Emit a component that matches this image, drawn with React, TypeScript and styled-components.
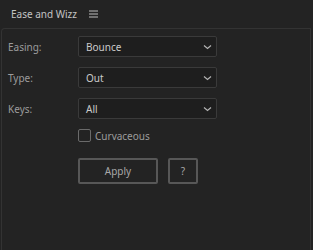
import React from "react";
import styled, { createGlobalStyle } from "styled-components";

const FONT = `"Noto Sans", Lato, "Liberation Sans", sans-serif`;

const Global = createGlobalStyle`
  html, body { margin: 0; padding: 0; background: #232323; }
  body { width: 313px; height: 250px; overflow: hidden; font-family: ${FONT}; }
`;

const Shell = styled.div`
  display: flex;
  flex-direction: column;
  height: 250px;
  background: #232323;
`;

const Header = styled.div`
  height: 28px;
  display: flex;
  align-items: center;
  gap: 12px;
  padding-left: 11px;
  box-sizing: border-box;
`;

const Title = styled.span`
  font-size: 10px;
  color: #c4c4c4;
`;

const Panel = styled.div`
  flex: 1;
  margin: 0 2px 0 1px;
  border: 1px solid #333333;
  border-bottom: none;
  border-top-left-radius: 4px;
  border-top-right-radius: 1px;
  padding: 7px 0 0 6px;
  display: flex;
  flex-direction: column;
`;

const FieldGrid = styled.div`
  display: grid;
  grid-template-columns: 70px 139px;
  row-gap: 10px;
  align-items: center;
`;

const Label = styled.span`
  font-size: 10px;
  color: #9c9c9c;
`;

const Select = styled.div`
  height: 21px;
  box-sizing: border-box;
  border: 1px solid #3a3a3a;
  border-radius: 2px;
  background: #1e1e1e;
  display: flex;
  align-items: center;
  justify-content: space-between;
  padding: 0 4px 0 7px;
  font-size: 10px;
  color: #cacaca;
`;

const CheckRow = styled.div`
  margin-top: 10px;
  padding-left: 70px;
  display: flex;
  align-items: center;
  gap: 4px;
  font-size: 10px;
  color: #9c9c9c;
  height: 13px;
`;

const Box = styled.span`
  flex: none;
  width: 13px;
  height: 13px;
  box-sizing: border-box;
  border: 1px solid #6a6a6a;
  border-radius: 2px;
`;

const Buttons = styled.div`
  margin-top: 16px;
  padding-left: 70px;
  display: flex;
  gap: 10px;
`;

const Button = styled.button<{ $w: number }>`
  width: ${(p) => p.$w}px;
  height: 26px;
  box-sizing: border-box;
  border: 2px solid #575757;
  border-radius: 2px;
  background: transparent;
  color: #a8a8a8;
  font-family: ${FONT};
  font-size: 10px;
  padding: 0;
`;

const Chevron = () => (
  <svg width="9" height="6" viewBox="0 0 9 6">
    <path d="M1 1.5 L4.5 4.5 L8 1.5" fill="none" stroke="#b4b4b4" strokeWidth="1.2" />
  </svg>
);

const Burger = () => (
  <svg width="9" height="8" viewBox="0 0 9 8">
    <path d="M0 1h9M0 4h9M0 7h9" stroke="#bdbdbd" strokeWidth="1" />
  </svg>
);

const fields: [string, string][] = [
  ["Easing:", "Bounce"],
  ["Type:", "Out"],
  ["Keys:", "All"],
];

export default function App() {
  return (
    <Shell>
      <Global />
      <Header>
        <Title>Ease and Wizz</Title>
        <Burger />
      </Header>
      <Panel>
        <FieldGrid>
          {fields.map(([l, v]) => (
            <React.Fragment key={l}>
              <Label>{l}</Label>
              <Select>
                <span>{v}</span>
                <Chevron />
              </Select>
            </React.Fragment>
          ))}
        </FieldGrid>
        <CheckRow>
          <Box />
          <span>Curvaceous</span>
        </CheckRow>
        <Buttons>
          <Button $w={80}>Apply</Button>
          <Button $w={30}>?</Button>
        </Buttons>
      </Panel>
    </Shell>
  );
}
